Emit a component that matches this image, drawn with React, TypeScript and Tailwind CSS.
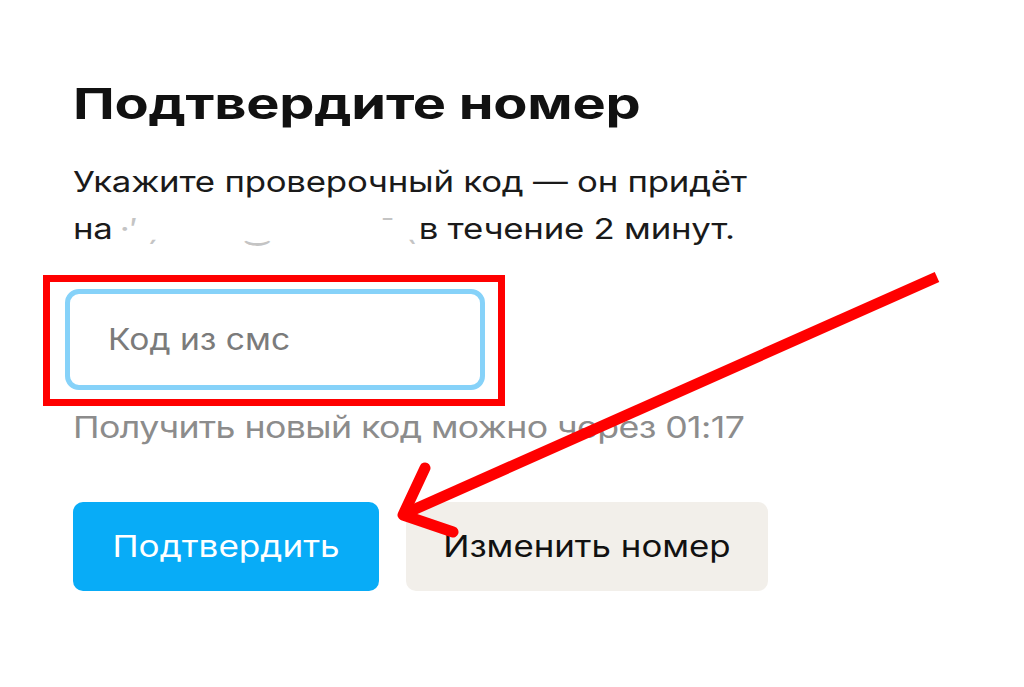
import React from 'react'

const font = { fontFamily: 'Inter, "Noto Sans", sans-serif' }

function Arrow() {
  return (
    <svg
      className="pointer-events-none absolute left-0 top-0"
      width={1024}
      height={687}
      viewBox="0 0 1024 687"
      fill="none"
    >
      <line x1={937} y1={277} x2={404} y2={514} stroke="#ff0000" strokeWidth={11} />
      <polyline
        points="425,468 403,515 453,532"
        stroke="#ff0000"
        strokeWidth={11}
        strokeLinecap="round"
        strokeLinejoin="round"
      />
    </svg>
  )
}

export default function App() {
  return (
    <div className="relative h-[687px] w-[1024px] overflow-hidden bg-white" style={font}>
      <div className="flex flex-col pl-[73px] pt-[76px]">
        <h1 className="origin-left scale-x-[1.3] whitespace-nowrap text-[43px] font-bold leading-[54px] tracking-[-0.2px] text-[#111]">
          Подтвердите номер
        </h1>
        <p className="mt-[28px] origin-left scale-x-[1.2] whitespace-nowrap text-[29px] leading-[47px] tracking-[-0.2px] text-[#1a1a1a]">
          Укажите проверочный код — он придёт
          <br />
          на
          <span className="inline-block w-[255px] pl-[6px] text-[#c4c4c4]">
            ·′ ˏ<span className="inline-block w-[70px]" />‿<span className="inline-block w-[90px]" />¯ ˎ
          </span>
          в течение 2 минут.
        </p>

        <div className="relative mt-[37px] ml-[-8px] w-[420px]">
          <div className="flex h-[101px] items-center rounded-[14px] border-[5px] border-[#86d2f9] bg-white pl-[38px]">
            <span className="origin-left scale-x-[1.12] text-[30px] text-[#7b7b7b]">Код из смс</span>
          </div>
          <div className="pointer-events-none absolute left-[-22px] right-[-20px] top-[-14px] bottom-[-16px] border-[7px] border-[#ff0000]" />
        </div>

        <p className="mt-[19px] origin-left scale-x-[1.19] whitespace-nowrap text-[30px] leading-[36px] tracking-[-0.5px] text-[#8c8c8c]">
          Получить новый код можно через 01:17
        </p>

        <div className="mt-[57px] flex gap-[27px]">
          <button className="flex h-[89px] w-[306px] items-center justify-center rounded-[10px] bg-[#08acf7] text-[30px] text-white">
            <span className="scale-x-[1.17]">Подтвердить</span>
          </button>
          <button className="flex h-[89px] w-[362px] items-center justify-center rounded-[10px] bg-[#f2efea] text-[30px] text-[#111]">
            <span className="scale-x-[1.16]">Изменить номер</span>
          </button>
        </div>
      </div>
      <Arrow />
    </div>
  )
}
